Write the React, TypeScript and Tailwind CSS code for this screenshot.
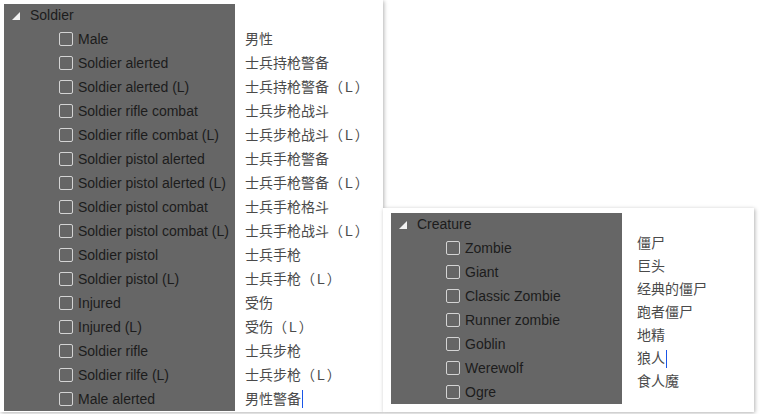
const soldier = [
  ["Male", "男性"],
  ["Soldier alerted", "士兵持枪警备"],
  ["Soldier alerted (L)", "士兵持枪警备（L）"],
  ["Soldier rifle combat", "士兵步枪战斗"],
  ["Soldier rifle combat (L)", "士兵步枪战斗（L）"],
  ["Soldier pistol alerted", "士兵手枪警备"],
  ["Soldier pistol alerted (L)", "士兵手枪警备（L）"],
  ["Soldier pistol combat", "士兵手枪格斗"],
  ["Soldier pistol combat (L)", "士兵手枪战斗（L）"],
  ["Soldier pistol", "士兵手枪"],
  ["Soldier pistol (L)", "士兵手枪（L）"],
  ["Injured", "受伤"],
  ["Injured (L)", "受伤（L）"],
  ["Soldier rifle", "士兵步枪"],
  ["Soldier rilfe (L)", "士兵步枪（L）"],
  ["Male alerted", "男性警备"],
];

const creature = [
  ["Zombie", "僵尸"],
  ["Giant", "巨头"],
  ["Classic Zombie", "经典的僵尸"],
  ["Runner zombie", "跑者僵尸"],
  ["Goblin", "地精"],
  ["Werewolf", "狼人"],
  ["Ogre", "食人魔"],
];

const font = { fontFamily: '"Liberation Sans", Arial, "Noto Sans CJK SC", sans-serif' };

function Caret() {
  return <span className="ml-px inline-block h-[18px] w-px bg-[#1a56e8] align-middle" />;
}

function Header({ label }: { label: string }) {
  return (
    <div className="flex h-[23px] items-center">
      <svg width="8" height="8" viewBox="0 0 8 8" className="ml-2 mr-[10px]">
        <polygon points="8,0 8,8 0,8" fill="#f2f2f2" />
      </svg>
      <span className="text-[14px] text-[#1c1c1c]">{label}</span>
    </div>
  );
}

function Row({ label }: { label: string }) {
  return (
    <div className="flex h-6 items-center pl-[55px]">
      <span className="mr-[5px] h-[14px] w-[14px] rounded-[2px] border border-[#d4d4d4]" />
      <span className="text-[14px] text-[#1c1c1c]">{label}</span>
    </div>
  );
}

function Zh({ text, caret, tall }: { text: string; caret?: boolean; tall?: boolean }) {
  const hasL = text.endsWith("（L）");
  const base = hasL ? text.slice(0, -3) : text;
  return (
    <div className={`flex items-center whitespace-nowrap text-[14px] text-[#4a4a4a] ${tall ? "h-6" : "h-[23px]"}`}>
      <span>
        {base}
        {hasL && (
          <>
            （<span className="mx-[2px]">L</span>）
          </>
        )}
      </span>
      {caret && <Caret />}
    </div>
  );
}

export default function App() {
  return (
    <div className="flex h-[414px] w-[762px] items-start bg-white" style={font}>
      <div className="flex h-[412px] w-[383px] shrink-0 bg-white pl-1 pt-1 shadow-[1px_1px_4px_rgba(0,0,0,0.3)]">
        <div className="h-[407px] w-[231px] bg-[#666666]">
          <Header label="Soldier" />
          {soldier.map(([en]) => (
            <Row key={en} label={en} />
          ))}
        </div>
        <div className="pl-[10px] pt-[23px]">
          {soldier.map(([en, zh], i) => (
            <Zh key={en} text={zh} tall caret={i === soldier.length - 1} />
          ))}
        </div>
      </div>
      <div className="mt-[208px] flex h-[204px] w-[371px] shrink-0 bg-white pl-2 pt-[5px] shadow-[1px_1px_4px_rgba(0,0,0,0.3)]">
        <div className="h-[191px] w-[231px] bg-[#666666]">
          <Header label="Creature" />
          {creature.map(([en]) => (
            <Row key={en} label={en} />
          ))}
        </div>
        <div className="pl-[15px] pt-[19px]">
          {creature.map(([en, zh]) => (
            <Zh key={en} text={zh} caret={en === "Werewolf"} />
          ))}
        </div>
      </div>
    </div>
  );
}
